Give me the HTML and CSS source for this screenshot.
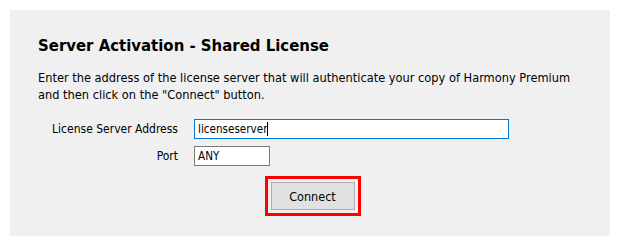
FILE: index.html
```html
<!DOCTYPE html>
<html lang="en">
<head>
    <meta charset="UTF-8">
    <title>Server Activation</title>
    <link rel="stylesheet" href="styles.css">
</head>
<body>
<div class="panel">
    <h1>Server Activation - Shared License</h1>
    <p class="intro">Enter the address of the license server that will authenticate your copy of Harmony Premium<br>and then click on the "Connect" button.</p>

    <!-- Server fields -->
    <div class="form">
        <label for="server-input">License Server Address</label>
        <div class="field wide focused" id="server-input">licenseserver<span class="caret"></span></div>

        <label for="port-input">Port</label>
        <div class="field narrow" id="port-input">ANY</div>
    </div>

    <div class="actions">
        <div class="highlight">
            <button class="connect">Connect</button>
        </div>
    </div>
</div>
</body>
</html>
```

FILE: styles.css
```css
body {
    margin: 10px;
    font-family: "DejaVu Sans Condensed", "DejaVu Sans", sans-serif;
    font-size: 12px;
    color: #000;
    background: #fff;
}

.panel {
    width: 600px;
    height: 226px;
    box-sizing: border-box;
    background: #f0f0f0;
    padding-top: 26px;
}

h1 {
    margin: 0 0 0 28px;
    font-size: 16.6px;
    font-weight: 700;
    line-height: 20px;
}

.intro {
    margin: 13px 0 0 28px;
    font-size: 12.7px;
    line-height: 17px;
}

.form {
    display: grid;
    grid-template-columns: 168px auto;
    column-gap: 16px;
    row-gap: 7px;
    margin-top: 16px;
    align-items: center;
}

.form label {
    text-align: right;
}

.field {
    box-sizing: border-box;
    height: 20px;
    line-height: 18px;
    padding-left: 3px;
    font-size: 11.6px;
    background: #fff;
    border: 1px solid #7a7a7a;
}
.field.wide {
    width: 315px;
}
.field.narrow {
    width: 76px;
}
.field.focused {
    border-color: #0078d7;
}

.caret {
    display: inline-block;
    width: 1px;
    height: 14px;
    vertical-align: -3px;
    background: #000;
}

.actions {
    display: flex;
    justify-content: center;
    margin-top: 10px;
    padding-left: 5px;
}

.highlight {
    display: flex;
    padding: 3px;
    border: 3px solid #ff0000;
}

.connect {
    box-sizing: border-box;
    width: 84px;
    height: 28px;
    font-family: inherit;
    font-size: 12.5px;
    color: #000;
    background: #e1e1e1;
    border: 1px solid #adadad;
}
```
